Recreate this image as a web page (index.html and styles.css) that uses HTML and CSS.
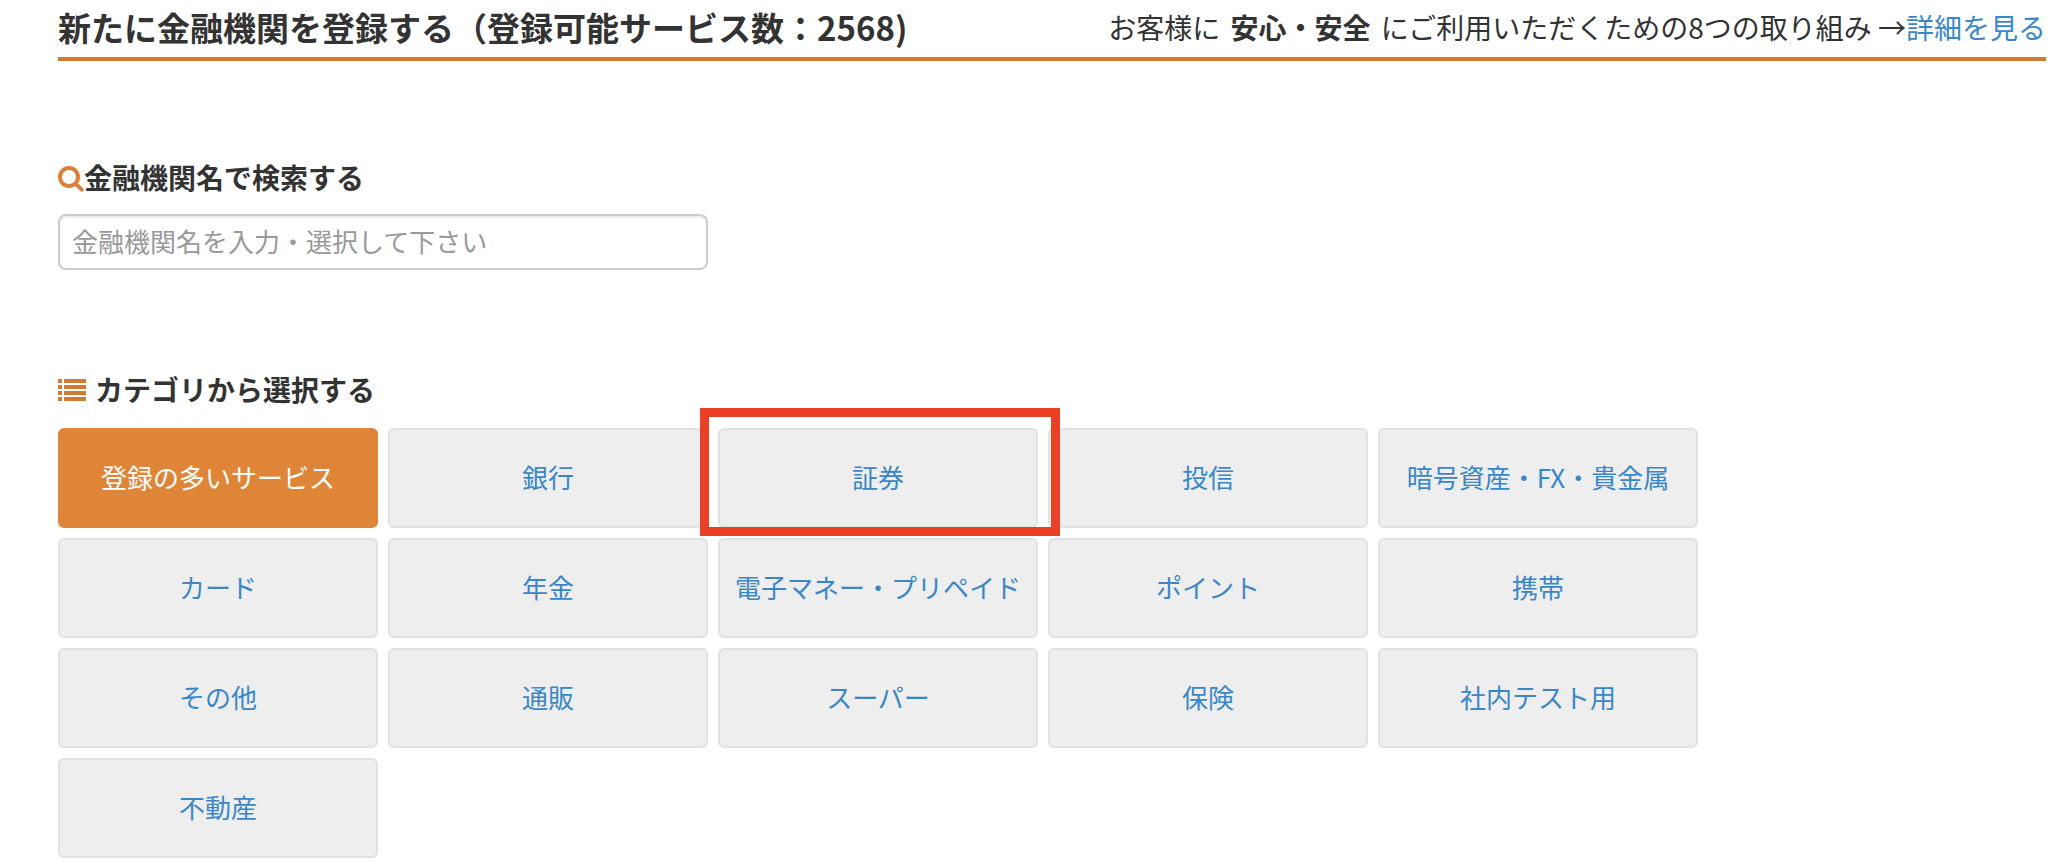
FILE: index.html
```html
<!DOCTYPE html>
<html lang="ja">
<head>
  <meta charset="UTF-8">
  <title>金融機関を登録する</title>
  <meta name="viewport" content="width=device-width, initial-scale=1.0">
  <link rel="stylesheet" href="styles.css">
</head>
<body>
  <header class="page-header">
    <h1>新たに金融機関を登録する（登録可能サービス数：2568)</h1>
    <p class="safety">お客様に <strong>安心・安全</strong> にご利用いただくための8つの取り組み →<a href="#">詳細を見る</a></p>
  </header>

  <main>
    <form class="search">
      <h2>
        <svg class="icon-search" viewBox="0 0 26 26" aria-hidden="true">
          <circle cx="11" cy="11" r="9"/>
          <path d="M17.5 17.5L23.7 23.7"/>
        </svg>
        <label for="institution">金融機関名で検索する</label>
      </h2>
      <input type="text" id="institution" name="institution" placeholder="金融機関名を入力・選択して下さい">
    </form>

    <section class="category">
      <h2>
        <svg class="icon-list" viewBox="0 0 28 22" aria-hidden="true">
          <path d="M0 0h4v4H0zM6 0h22v4H6zM0 6h4v4H0zM6 6h22v4H6zM0 12h4v4H0zM6 12h22v4H6zM0 18h4v4H0zM6 18h22v4H6z"/>
        </svg>
        カテゴリから選択する
      </h2>
      <ul class="category-list">
        <li class="active"><a href="#">登録の多いサービス</a></li>
        <li><a href="#">銀行</a></li>
        <li class="marked"><a href="#">証券</a></li>
        <li><a href="#">投信</a></li>
        <li><a href="#">暗号資産・FX・貴金属</a></li>
        <li><a href="#">カード</a></li>
        <li><a href="#">年金</a></li>
        <li><a href="#">電子マネー・プリペイド</a></li>
        <li><a href="#">ポイント</a></li>
        <li><a href="#">携帯</a></li>
        <li><a href="#">その他</a></li>
        <li><a href="#">通販</a></li>
        <li><a href="#">スーパー</a></li>
        <li><a href="#">保険</a></li>
        <li><a href="#">社内テスト用</a></li>
        <li><a href="#">不動産</a></li>
      </ul>
    </section>
  </main>
</body>
</html>
```
FILE: styles.css
```css
* {
  box-sizing: border-box;
}
body {
  margin: 0;
  padding: 0 22px 0 58px;
  font-family: "Noto Sans CJK JP", sans-serif;
  font-size: 26px;
  color: #333;
  background: #fff;
}
h1, h2, p, ul {
  margin: 0;
  padding: 0;
}
a {
  color: #3a87c8;
  text-decoration: none;
}
.page-header {
  display: flex;
  flex-wrap: wrap;
  justify-content: space-between;
  align-items: center;
  padding-bottom: 3px;
  border-bottom: 4px solid #d27a30;
}
h1 {
  font-size: 33px;
  line-height: 54px;
}
.safety {
  font-size: 28px;
  line-height: 54px;
}
.safety strong {
  margin: 0 4px;
}
h2 {
  display: flex;
  align-items: center;
  font-size: 28px;
  line-height: 40px;
}

/* search */
.search {
  margin-top: 96px;
}
.icon-search {
  width: 26px;
  height: 26px;
  margin-top: 4px;
  fill: none;
  stroke: #d9813a;
  stroke-width: 4;
  stroke-linecap: round;
}
.search input {
  display: block;
  width: 650px;
  max-width: 100%;
  height: 56px;
  margin-top: 17px;
  padding: 0 12px 4px;
  font-family: inherit;
  font-size: 26px;
  color: #555;
  border: 2px solid #ccc;
  border-radius: 8px;
  box-shadow: inset 0 2px 2px rgba(0,0,0,0.08);
}
.search input::placeholder {
  color: #999;
}

/* categories */
.category {
  margin-top: 99px;
}
.icon-list {
  width: 28px;
  height: 22px;
  margin-top: 2px;
  margin-right: 9px;
  fill: #d27a30;
}
.category-list {
  display: grid;
  grid-template-columns: repeat(5, 1fr);
  gap: 10px;
  max-width: 1640px;
  margin-top: 19px;
  list-style: none;
}
.category-list a {
  display: flex;
  align-items: center;
  justify-content: center;
  height: 100px;
  padding-bottom: 4px;
  background: #eee;
  border: 2px solid #e1e1e1;
  border-radius: 6px;
}
.category-list .active a {
  color: #fff;
  background: #df8537;
  border-color: #df8537;
}
/* red frame around the category to pick */
.marked {
  position: relative;
}
.marked::after {
  content: "";
  position: absolute;
  top: -20px;
  right: -22px;
  bottom: -8px;
  left: -18px;
  z-index: 1;
  border: 9px solid #ea4025;
  pointer-events: none;
}
```
